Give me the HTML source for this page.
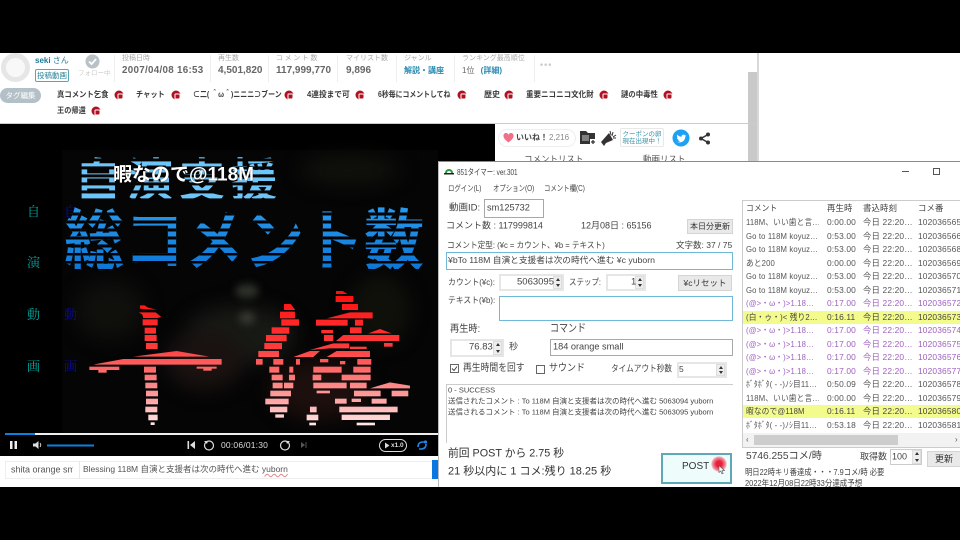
<!DOCTYPE html>
<html lang="ja"><head><meta charset="utf-8"><title>851タイマー</title>
<style>
*{box-sizing:border-box}
html,body{margin:0;padding:0;width:960px;height:540px;overflow:hidden;background:#000}
body{font-family:"Liberation Sans","Noto Sans CJK JP",sans-serif;color:#333;position:relative}
#all{position:absolute;left:0;top:0;width:960px;height:540px;overflow:hidden;filter:blur(.35px)}
.a{position:absolute}
.t{position:absolute;white-space:nowrap;line-height:1.2;transform:translateY(-50%) scaleX(var(--s,1));transform-origin:left center}
.lab{font-size:7px;color:#aaa}
.val{font-size:10px;font-weight:bold;color:#666}
.tag{font-size:8px;font-weight:bold;color:#3a3a3a}
.ic{position:absolute;width:9px;height:9px;border-radius:50%;background:#b01020;transform:translate(-50%,-50%)}
.ic:after{content:"";position:absolute;left:2.5px;top:2.5px;width:4px;height:4px;border:1px solid #fff;border-radius:1px}
.dv{position:absolute;width:1px;background:#eee;top:55px;height:27px}
.box{position:absolute;background:#fff;border:1px solid #a8a8a8}
.blu{border:1px solid #70b8d8}
.btn{position:absolute;background:#e9e9e9;border:1px solid #d4d4d4;text-align:center;color:#333}
.spin{position:absolute;background:#fff;border:2px solid #e6e6e6;color:#444}
.ar{position:absolute;width:9px;background:#eee;right:0;top:0;bottom:0;border:1px solid #ddd}
.ar:before,.ar:after{content:"";position:absolute;left:1.5px;border-left:2.5px solid transparent;border-right:2.5px solid transparent}
.ar:before{top:1px;border-bottom:3px solid #333}
.ar:after{bottom:1px;border-top:3px solid #333}
.f85{font-size:8.5px;color:#444}
.row{position:absolute;left:743px;width:217px;height:13px;font-size:8.4px;letter-spacing:.15px;color:#555;line-height:13px;white-space:nowrap}
.row span{position:absolute;top:0}
.row span:nth-child(1){left:3px;width:79px;overflow:hidden;transform:scaleX(.92);transform-origin:left center}
.row span:nth-child(2){left:84px}
.row span:nth-child(3){left:120px}
.row span:nth-child(4){left:175px}
.p{color:#a060c0}
.y{background:#f3fb8c;color:#444}
.head{color:#444}
.sf{font-size:13px;font-family:'Liberation Serif','Noto Serif CJK SC',serif}
</style></head>
<body><div id="all">

<!-- page white -->
<div class="a" style="left:0;top:53px;width:960px;height:434px;background:#fff"></div>
<div class="a" style="left:757px;top:53px;width:2px;height:108px;background:#d8d8d8"></div>
<div class="a" style="left:748px;top:72px;width:9px;height:89px;background:#c9c9c9"></div>
<div class="a" style="left:0;top:123px;width:757px;height:1px;background:#ccc"></div>

<!-- owner -->
<div class="a" style="left:1px;top:53px;width:29px;height:29px;border-radius:50%;border:5px solid #e6e6e6;background:#f8f8f8"></div>
<div class="t" style="left:35px;top:61px;font-size:8px;font-weight:bold;color:#1b7b9b">seki <span style="font-weight:normal">さん</span></div>
<div class="a" style="left:35px;top:69px;width:34px;height:13px;border:1px solid #5aa5b5;border-radius:2px;font-size:7.5px;line-height:11px;text-align:center;color:#2a8398">投稿動画</div>
<svg class="a" style="left:85px;top:54px" width="15" height="15"><circle cx="7.5" cy="7.5" r="7" fill="#b9c2c7"/><path d="M4 7.5l2.6 2.6L11 5" fill="none" stroke="#fff" stroke-width="1.8"/></svg>
<div class="t" style="left:78px;top:74px;font-size:6.5px;color:#ccc">フォロー中</div>

<div class="dv" style="left:114px"></div><div class="dv" style="left:210px"></div><div class="dv" style="left:268px"></div><div class="dv" style="left:337px"></div><div class="dv" style="left:396px"></div><div class="dv" style="left:454px"></div><div class="dv" style="left:534px"></div>

<div class="t lab" style="left:122px;top:59px">投稿日時</div><div class="t val" style="left:122px;top:71px;letter-spacing:.3px;--s:.98">2007/04/08 16:53</div>
<div class="t lab" style="left:218px;top:59px">再生数</div><div class="t val" style="left:218px;top:71px">4,501,820</div>
<div class="t lab" style="left:276px;top:59px;letter-spacing:1.6px">コメント数</div><div class="t val" style="left:276px;top:71px">117,999,770</div>
<div class="t lab" style="left:346px;top:59px">マイリスト数</div><div class="t val" style="left:346px;top:71px">9,896</div>
<div class="t lab" style="left:404px;top:59px">ジャンル</div><div class="t" style="left:404px;top:71px;font-size:8px;font-weight:bold;color:#2a8ab0">解説・講座</div>
<div class="t lab" style="left:462px;top:59px">ランキング最高順位</div><div class="t" style="left:462px;top:71px;font-size:8px;color:#666">1位 <span style="color:#2a8ab0;font-weight:bold;margin-left:4px">(詳細)</span></div>
<div class="t" style="left:540px;top:65px;font-size:9px;letter-spacing:1px;font-weight:bold;color:#ccc">•••</div>

<!-- tags -->
<div class="a" style="left:0;top:88px;width:41px;height:15px;border-radius:8px;background:#b4c0c8;color:#fff;font-size:7.5px;text-align:center;line-height:15px">タグ編集</div>
<div class="t tag" style="left:57px;top:95px;--s:.92">真コメント乞食</div><div class="ic" style="left:119px;top:95px"></div>
<div class="t tag" style="left:136px;top:95px;--s:.9">チャット</div><div class="ic" style="left:176px;top:95px"></div>
<div class="t tag" style="left:193px;top:95px;--s:.87">⊂二( ＾ω＾)ニニニ⊃ブーン</div><div class="ic" style="left:289px;top:95px"></div>
<div class="t tag" style="left:307px;top:95px;--s:.96">4連投まで可</div><div class="ic" style="left:360px;top:95px"></div>
<div class="t tag" style="left:378px;top:95px;--s:.86">6秒毎にコメントしてね</div><div class="ic" style="left:462px;top:95px"></div>
<div class="t tag" style="left:484px;top:95px">歴史</div><div class="ic" style="left:509px;top:95px"></div>
<div class="t tag" style="left:526px;top:95px;--s:.94">重要ニコニコ文化財</div><div class="ic" style="left:604px;top:95px"></div>
<div class="t tag" style="left:621px;top:95px;--s:.92">謎の中毒性</div><div class="ic" style="left:668px;top:95px"></div>
<div class="t tag" style="left:57px;top:111px;--s:.9">王の帰還</div><div class="ic" style="left:96px;top:111px"></div>

<!-- video -->
<div class="a" style="left:0;top:124px;width:495px;height:37px;background:#000"></div>
<div class="a" style="left:0;top:124px;width:438px;height:332px;background:#000;overflow:hidden">
<svg class="a" style="left:0;top:0" width="438" height="332" viewBox="0 124 438 332">
<defs>
<filter id="b" x="-30%" y="-30%" width="160%" height="160%" color-interpolation-filters="sRGB"><feGaussianBlur stdDeviation="9"/></filter>
<filter id="b2" x="-30%" y="-30%" width="160%" height="160%" color-interpolation-filters="sRGB"><feGaussianBlur stdDeviation="4"/></filter>
<linearGradient id="rd" gradientUnits="userSpaceOnUse" x1="0" y1="50" x2="0" y2="460"><stop offset="0" stop-color="#ff0d0d"/><stop offset=".4" stop-color="#ff3a3a"/><stop offset=".55" stop-color="#ff6464"/><stop offset=".8" stop-color="#ffa6a6"/><stop offset="1" stop-color="#fff2f2"/></linearGradient>
</defs>
<rect x="62" y="150" width="376" height="285" fill="#050505"/>
<g filter="url(#b)">
<ellipse cx="240" cy="335" rx="55" ry="30" fill="#171915"/>
<ellipse cx="205" cy="360" rx="40" ry="30" fill="#191210"/>
<ellipse cx="320" cy="390" rx="50" ry="30" fill="#1c0f0d"/>
<ellipse cx="110" cy="310" rx="35" ry="30" fill="#0f100c"/>
<ellipse cx="350" cy="170" rx="50" ry="15" fill="#10110c"/>
<ellipse cx="380" cy="310" rx="30" ry="35" fill="#10100b"/>
</g>
<g filter="url(#b2)">
<ellipse cx="247" cy="291" rx="12" ry="7" fill="#2e322a"/>
<ellipse cx="247" cy="318" rx="8" ry="6" fill="#383a33"/>
</g>
<g transform="translate(0,275) scale(.3333)" fill="url(#rd)">
<path d="M420 91h14l10 7 26 6-30-1-20-2z"/>
<path d="M417 112h50l17 14-12 3h-42l-3-10z"/>
<rect x="428" y="133" width="45" height="18"/><rect x="434" y="158" width="34" height="18"/><rect x="434" y="180" width="36" height="18"/><rect x="438" y="204" width="35" height="18"/>
<path d="M400 245L530 228 628 245z"/><path d="M283 268L370 252H665V269H283z"/>
<rect x="268" y="275" width="90" height="10"/><rect x="295" y="285" width="25" height="8"/><rect x="590" y="275" width="60" height="6"/><rect x="610" y="280" width="25" height="7"/>
<rect x="432" y="275" width="36" height="18"/><rect x="434" y="299" width="36" height="17"/><rect x="436" y="323" width="36" height="17"/><rect x="438" y="347" width="36" height="17"/><rect x="438" y="371" width="36" height="17"/><rect x="436" y="395" width="36" height="17"/><rect x="445" y="419" width="28" height="17"/><rect x="452" y="442" width="12" height="8"/>
<path d="M852 87h20l14 18h-34z"/><rect x="840" y="110" width="45" height="20"/><rect x="844" y="133" width="53" height="19"/><rect x="815" y="157" width="53" height="19"/><rect x="798" y="180" width="62" height="19"/><rect x="793" y="204" width="53" height="18"/><rect x="775" y="228" width="62" height="18"/><rect x="768" y="252" width="20" height="17"/><rect x="820" y="252" width="30" height="17"/><rect x="808" y="275" width="30" height="18"/><rect x="868" y="275" width="12" height="18"/><rect x="888" y="252" width="12" height="17"/><rect x="815" y="299" width="33" height="17"/><rect x="867" y="299" width="18" height="17"/><rect x="818" y="323" width="30" height="17"/><rect x="852" y="323" width="28" height="17"/><rect x="811" y="347" width="62" height="17"/><rect x="796" y="371" width="70" height="17"/><rect x="810" y="395" width="52" height="17"/><rect x="826" y="418" width="26" height="10"/>
<path d="M1008 48h20l14 9h-34z"/><rect x="1007" y="63" width="53" height="18"/><rect x="1026" y="87" width="48" height="18"/><path d="M980 130L1050 112H1118V130z"/><rect x="948" y="134" width="95" height="18"/><rect x="1065" y="134" width="24" height="18"/><rect x="1050" y="157" width="35" height="18"/><rect x="964" y="165" width="35" height="10"/><rect x="972" y="180" width="28" height="18"/><path d="M1008 198L1030 180H1198V198z"/><path d="M1105 175L1140 162 1175 175z"/><rect x="1152" y="204" width="26" height="11"/><path d="M930 225L1000 205H1048V220H990z"/><rect x="1050" y="215" width="50" height="7"/><path d="M880 246L930 228H960L940 246z"/><path d="M980 246L1010 228H1110V246z"/><rect x="960" y="252" width="25" height="10"/><rect x="1020" y="258" width="16" height="10"/><rect x="1072" y="252" width="42" height="17"/><rect x="940" y="275" width="85" height="18"/><rect x="1060" y="275" width="52" height="18"/><rect x="938" y="299" width="26" height="17"/><rect x="1025" y="299" width="87" height="17"/><rect x="940" y="323" width="100" height="17"/><rect x="1050" y="323" width="50" height="17"/><path d="M1110 340L1170 322 1230 332V340z"/><rect x="950" y="347" width="40" height="8"/><rect x="1062" y="347" width="80" height="17"/><rect x="1175" y="347" width="50" height="17"/><rect x="1005" y="371" width="35" height="15"/><rect x="1055" y="371" width="28" height="10"/><rect x="1115" y="371" width="45" height="15"/><rect x="930" y="395" width="20" height="17"/><rect x="1018" y="395" width="175" height="17"/><rect x="920" y="419" width="35" height="17"/><rect x="1025" y="419" width="145" height="16"/><rect x="928" y="443" width="20" height="8"/><rect x="1070" y="443" width="55" height="8"/>
</g>
</svg>
</div>
<!-- vertical scrolling text -->
<div class="t sf" style="left:27px;top:212px;color:#00a8a0">自</div>
<div class="t sf" style="left:27px;top:263px;color:#00a8a0">演</div>
<div class="t sf" style="left:27px;top:315px;color:#00a8a0">動</div>
<div class="t sf" style="left:27px;top:367px;color:#00a8a0">画</div>
<div class="t sf" style="left:64px;top:212px;color:#0a0aa8">自</div>
<div class="t sf" style="left:64px;top:315px;color:#0a0aa8">動</div>
<div class="t sf" style="left:64px;top:367px;color:#0a0aa8">画</div>
<!-- striped headings -->
<div class="t" style="left:75px;top:181px;font-size:46px;letter-spacing:6px;font-weight:bold;color:transparent;background:repeating-linear-gradient(#6cc6fa 0 5px,transparent 5px 8px);-webkit-background-clip:text;background-clip:text">自演支援</div>
<div class="t" style="left:64px;top:242px;font-size:60px;font-weight:bold;color:transparent;background:repeating-linear-gradient(transparent 0 2.7px,#000 2.700px 5.100px,transparent 5.100px 7.150px),linear-gradient(#2a9cf0,#0870d0);-webkit-background-clip:text;background-clip:text;transform:translateY(-50%) scale(1,1.12)">総コメント数</div>
<div class="t" style="left:113px;top:176px;font-size:19px;font-weight:bold;color:#fff;text-shadow:0 0 1px #000">暇なので@118M</div>

<!-- seekbar & controls -->
<div class="a" style="left:5px;top:433px;width:433px;height:2px;background:#eee"></div>
<div class="a" style="left:5px;top:433px;width:30px;height:2px;background:#0a80e0"></div>
<svg class="a" style="left:0;top:437px" width="438" height="18" viewBox="0 437 438 18">
<path d="M10 441h2.500v8H10zM14.500 441h2.500v8h-2.500z" fill="#eee"/>
<path d="M33 443.500h2.500l3-2.500v8l-3-2.500H33z" fill="#ddd"/><path d="M40 443q1.500 2 0 4" stroke="#ccc" fill="none"/>
<rect x="47" y="444.500" width="47" height="2" fill="#0a80e0"/>
<path d="M187.500 441h1.600v8h-1.600zM195 441v8l-5-4z" fill="#ddd"/>
<circle cx="209" cy="445.500" r="4.500" fill="none" stroke="#ddd" stroke-width="1.200"/><path d="M204 441l4 0-1 3z" fill="#ddd"/>
<circle cx="285" cy="445.500" r="4.500" fill="none" stroke="#ddd" stroke-width="1.200"/><path d="M290 441l-4 0 1 3z" fill="#ddd"/>
<path d="M301 442v6l4-3zM305.500 442h1v6h-1z" fill="#555"/>
<rect x="379.500" y="439.500" width="27" height="12" rx="6" fill="none" stroke="#ddd"/>
<path d="M385 442.500v6l4.500-3z" fill="#ddd"/>
<path d="M418 447q0-5 5-5h2M426 444q0 5-5 5h-2" fill="none" stroke="#1a88e8" stroke-width="1.600"/>
<circle cx="425.500" cy="442" r="1.600" fill="#1a88e8"/>
</svg>
<div class="t" style="left:221px;top:445px;font-size:8.500px;letter-spacing:.2px;color:#ddd">00:06/01:30</div>
<div class="t" style="left:391px;top:446px;font-size:6.500px;font-weight:bold;color:#ddd">x1.0</div>

<!-- comment bar -->
<div class="a" style="left:0;top:456px;width:438px;height:31px;background:#fff"></div>
<div class="a" style="left:5px;top:461px;width:428px;height:18px;border:1px solid #eee"></div>
<div class="a" style="left:79px;top:461px;width:1px;height:18px;background:#e8e8e8"></div>
<div class="t" style="left:11px;top:470px;font-size:9px;width:62px;overflow:hidden;color:#555">shita orange sm</div>
<div class="t" style="left:83px;top:469px;font-size:8.500px;color:#555">Blessing 118M 自演と支援者は次の時代へ進む <span style="text-decoration:underline wavy #d88;text-decoration-thickness:.5px">yuborn</span></div>
<div class="a" style="left:432px;top:460px;width:6px;height:19px;background:#0a78e0"></div>

<!-- right of video -->
<div class="a" style="left:498px;top:129px;width:78px;height:18px;border:1px solid #eee;border-radius:9px;background:#fff"></div>
<svg class="a" style="left:503px;top:133px" width="11" height="10"><path d="M5.500 9.500C1 6 .5 4.500.5 3A2.500 2.500 0 0 1 5.500 2 2.500 2.500 0 0 1 10.500 3c0 1.500-.5 3-5 6.500z" fill="#f07088"/></svg>
<div class="t" style="left:516px;top:138px;font-size:8px;font-weight:bold;color:#444">いいね！</div>
<div class="t" style="left:549px;top:138px;font-size:8px;color:#888">2,216</div>
<svg class="a" style="left:579px;top:130px" width="18" height="16"><path d="M1 1h6l2 2h7v11H1z" fill="#333"/><path d="M3 6h7M3 8h7M3 10h7" stroke="#fff" stroke-width=".8"/><path d="M11 9h6v6h-6z" fill="#fff"/><path d="M12 12h4M14 10v4" stroke="#333" stroke-width="1.300"/></svg>
<svg class="a" style="left:600px;top:129px" width="17" height="17"><path d="M1 13L9 4l4 7-7 3-2 3z" fill="#333"/><path d="M10 2l1 4M13 3l-1 4M16 6l-3 2M16 9l-3 0" stroke="#333"/></svg>
<div class="a" style="left:620px;top:128px;width:44px;height:19px;border:1px solid #e8e8e8;border-radius:2px;background:#fff;font-size:6.500px;line-height:7.500px;text-align:center;color:#3a93a8;padding-top:1.500px">クーポンの卵<br>現在出現中！</div>
<svg class="a" style="left:672px;top:129px" width="18" height="18"><circle cx="9" cy="9" r="8.500" fill="#1da1f2"/><path d="M4 12.500c4 2.200 9 .5 9.400-5l1-1.200-1.200.3c-.9-1.800-4-1-3.500 1.200-1.800 0-3.200-.8-4.500-2.200-.6 1.200-.2 2.400.7 3.100l-.9-.2c0 1.200.8 2 1.900 2.300l-.9 0c.3.900 1 1.400 2 1.500-1.100.8-2.500 1.100-4 .5z" fill="#fff"/></svg>
<svg class="a" style="left:698px;top:132px" width="13" height="13"><path d="M10 2.500L3 6.500 10 10.500" fill="none" stroke="#333" stroke-width="1.500"/><circle cx="10" cy="2.500" r="2" fill="#333"/><circle cx="3" cy="6.500" r="2" fill="#333"/><circle cx="10" cy="10.500" r="2" fill="#333"/></svg>
<div class="t" style="left:524px;top:159px;font-size:8.500px;color:#555">コメントリスト</div>
<div class="t" style="left:643px;top:159px;font-size:8.500px;color:#555">動画リスト</div>

<!-- window -->
<div class="a" style="left:438px;top:161px;width:522px;height:326px;background:#fff;border-top:1px solid #8a8a8a;border-left:1px solid #bbb"></div>
<svg class="a" style="left:444px;top:166px" width="10" height="9"><path d="M1 7a4 4 0 0 1 8 0z" fill="#2a9a3a"/><path d="M3 7a2 2 0 0 1 4 0z" fill="#fff"/><rect x="0" y="7" width="10" height="1.500" fill="#222"/></svg>
<div class="t" style="left:457px;top:172px;font-size:8.500px;color:#444;--s:.75">851タイマー: ver.301</div>
<div class="a" style="left:902px;top:171px;width:7px;height:1px;background:#555"></div>
<div class="a" style="left:933px;top:168px;width:7px;height:7px;border:1px solid #555"></div>

<div class="t" style="left:448px;top:189px;font-size:8px;color:#444;--s:.8">ログイン(L)</div>
<div class="t" style="left:493px;top:189px;font-size:8px;color:#444;--s:.8">オプション(O)</div>
<div class="t" style="left:544px;top:189px;font-size:8px;color:#444;--s:.8">コメント欄(C)</div>

<div class="t" style="left:449px;top:208px;font-size:9.500px;color:#444">動画ID:</div>
<div class="box" style="left:484px;top:199px;width:60px;height:19px"></div>
<div class="t" style="left:487px;top:208px;font-size:9.200px;color:#444">sm125732</div>
<div class="t" style="left:446px;top:226px;font-size:9px;color:#444">コメント数 : 117999814</div>
<div class="t" style="left:581px;top:226px;font-size:9px;color:#444">12月08日 : 65156</div>
<div class="btn" style="left:687px;top:219px;width:46px;height:15px;font-size:8px;line-height:13px">本日分更新</div>
<div class="t f85" style="left:447px;top:245px;--s:.9">コメント定型: (¥c = カウント、¥b = テキスト)</div>
<div class="t f85" style="left:676px;top:245px">文字数: 37 / 75</div>
<div class="box blu" style="left:446px;top:252px;width:287px;height:18px"></div>
<div class="t" style="left:448px;top:260px;font-size:8.700px;color:#444">¥bTo 118M 自演と支援者は次の時代へ進む ¥c yuborn</div>
<div class="t f85" style="left:448px;top:282px;--s:.92">カウント(¥c):</div>
<div class="spin" style="left:499px;top:274px;width:65px;height:17px"><div class="ar"></div></div>
<div class="t" style="left:517px;top:282px;font-size:9.500px;color:#444">5063095</div>
<div class="t f85" style="left:569px;top:282px;--s:.88">ステップ:</div>
<div class="spin" style="left:606px;top:274px;width:40px;height:17px"><div class="ar"></div></div>
<div class="t" style="left:631px;top:282px;font-size:9.500px;color:#444">1</div>
<div class="btn" style="left:678px;top:275px;width:54px;height:16px;font-size:8.500px;line-height:14px">¥cリセット</div>
<div class="t f85" style="left:448px;top:300px;--s:.92">テキスト(¥b):</div>
<div class="box blu" style="left:499px;top:296px;width:234px;height:25px"></div>

<div class="t" style="left:450px;top:330px;font-size:10px;color:#444;--s:.92">再生時:</div>
<div class="t" style="left:550px;top:329px;font-size:11px;color:#444;--s:.82">コマンド</div>
<div class="spin" style="left:450px;top:339px;width:54px;height:18px"><div class="ar"></div></div>
<div class="t" style="left:469px;top:347px;font-size:9.500px;color:#444">76.83</div>
<div class="t" style="left:509px;top:347px;font-size:9px;color:#444">秒</div>
<div class="box" style="left:550px;top:339px;width:183px;height:17px"></div>
<div class="t" style="left:553px;top:347px;font-size:9.200px;color:#444">184 orange small</div>

<svg class="a" style="left:450px;top:364px" width="10" height="10"><rect x=".5" y=".5" width="8" height="8" fill="#fff" stroke="#666"/><path d="M2 4.500l2 2 3-4" fill="none" stroke="#444"/></svg>
<div class="t" style="left:463px;top:369px;font-size:10px;color:#444;--s:.88">再生時間を回す</div>
<div class="a" style="left:536px;top:365px;width:9px;height:9px;border:1px solid #666"></div>
<div class="t" style="left:549px;top:369px;font-size:10px;color:#444;--s:.9">サウンド</div>
<div class="t" style="left:611px;top:369px;font-size:9px;color:#444;--s:.85">タイムアウト秒数</div>
<div class="spin" style="left:677px;top:362px;width:50px;height:16px"><div class="ar"></div></div>
<div class="t" style="left:679px;top:369px;font-size:8.500px;color:#444">5</div>

<div class="a" style="left:446px;top:384px;width:287px;height:59px;border-top:1px solid #ccc;border-left:1px solid #ccc"></div>
<div class="t" style="left:448px;top:390px;font-size:7.500px;color:#444">0 - SUCCESS</div>
<div class="t" style="left:448px;top:401px;font-size:7.500px;color:#444">送信されたコメント : To 118M 自演と支援者は次の時代へ進む 5063094 yuborn</div>
<div class="t" style="left:448px;top:412px;font-size:7.500px;color:#444">送信されるコメント : To 118M 自演と支援者は次の時代へ進む 5063095 yuborn</div>

<div class="t" style="left:448px;top:454px;font-size:11px;color:#333;--s:.98">前回 POST から 2.75 秒</div>
<div class="t" style="left:448px;top:472px;font-size:11px;color:#333">21 秒以内に 1 コメ:残り 18.25 秒</div>
<div class="a" style="left:661px;top:453px;width:71px;height:31px;background:#effcfc;border:2px solid #5fa8b8"></div>
<div class="t" style="left:682px;top:467px;font-size:10px;color:#333">POST</div>
<div class="a" style="left:711px;top:456px;width:16px;height:16px;border-radius:50%;background:radial-gradient(#e8203a 25%,rgba(240,80,100,.55) 60%,rgba(240,80,100,0) 72%)"></div>
<svg class="a" style="left:718px;top:465px" width="8" height="10"><path d="M1 .5v7l1.800-1.500 1.200 2.800 1.200-.5-1.200-2.700H6.500z" fill="#fff" stroke="#555" stroke-width=".6"/></svg>

<!-- list -->
<div class="a" style="left:742px;top:200px;width:218px;height:248px;border:1px solid #ccc;border-right:0"></div>
<div class="row head" style="top:202px"><span>コメント</span><span>再生時</span><span>書込時刻</span><span>コメ番</span></div>
<div class="row" style="top:216px"><span>118M、いい歯と言…</span><span>0:00.00</span><span>今日 22:20…</span><span>102036565</span></div>
<div class="row" style="top:229.500px"><span>Go to 118M koyuz…</span><span>0:53.00</span><span>今日 22:20…</span><span>102036566</span></div>
<div class="row" style="top:243px"><span>Go to 118M koyuz…</span><span>0:53.00</span><span>今日 22:20…</span><span>102036568</span></div>
<div class="row" style="top:256.500px"><span>あと200</span><span>0:00.00</span><span>今日 22:20…</span><span>102036569</span></div>
<div class="row" style="top:270px"><span>Go to 118M koyuz…</span><span>0:53.00</span><span>今日 22:20…</span><span>102036570</span></div>
<div class="row" style="top:283.500px"><span>Go to 118M koyuz…</span><span>0:53.00</span><span>今日 22:20…</span><span>102036571</span></div>
<div class="row p" style="top:297px"><span>(@&gt;・ω・)&gt;1.18…</span><span>0:17.00</span><span>今日 22:20…</span><span>102036572</span></div>
<div class="row y" style="top:310.500px"><span>(白・ゥ・)&lt; 残り2…</span><span>0:16.11</span><span>今日 22:20…</span><span>102036573</span></div>
<div class="row p" style="top:324px"><span>(@&gt;・ω・)&gt;1.18…</span><span>0:17.00</span><span>今日 22:20…</span><span>102036574</span></div>
<div class="row p" style="top:337.500px"><span>(@&gt;・ω・)&gt;1.18…</span><span>0:17.00</span><span>今日 22:20…</span><span>102036575</span></div>
<div class="row p" style="top:351px"><span>(@&gt;・ω・)&gt;1.18…</span><span>0:17.00</span><span>今日 22:20…</span><span>102036576</span></div>
<div class="row p" style="top:364.500px"><span>(@&gt;・ω・)&gt;1.18…</span><span>0:17.00</span><span>今日 22:20…</span><span>102036577</span></div>
<div class="row" style="top:378px"><span>ﾎﾞﾀﾎﾞﾀ( - -)ﾉｼ目11…</span><span>0:50.09</span><span>今日 22:20…</span><span>102036578</span></div>
<div class="row" style="top:391.500px"><span>118M、いい歯と言…</span><span>0:00.00</span><span>今日 22:20…</span><span>102036579</span></div>
<div class="row y" style="top:405px"><span>暇なので@118M</span><span>0:16.11</span><span>今日 22:20…</span><span>102036580</span></div>
<div class="row" style="top:418.500px"><span>ﾎﾞﾀﾎﾞﾀ( - -)ﾉｼ目11…</span><span>0:53.18</span><span>今日 22:20…</span><span>102036581</span></div>
<div class="a" style="left:743px;top:433px;width:217px;height:14px;background:#f2f2f2"></div>
<div class="a" style="left:754px;top:435px;width:144px;height:10px;background:#cdcdcd"></div>
<div class="t" style="left:746px;top:440px;font-size:8px;color:#555">‹</div>
<div class="t" style="left:955px;top:440px;font-size:8px;color:#555">›</div>

<div class="t" style="left:746px;top:457px;font-size:10.200px;color:#444">5746.255コメ/時</div>
<div class="t" style="left:860px;top:457px;font-size:9px;color:#444">取得数</div>
<div class="box" style="left:890px;top:449px;width:32px;height:16px;border-color:#ccc"><div class="ar"></div></div>
<div class="t" style="left:892px;top:457px;font-size:9px;color:#444">100</div>
<div class="btn" style="left:927px;top:451px;width:34px;height:16px;font-size:9px;line-height:14px">更新</div>
<div class="t f85" style="left:745px;top:472px;--s:.86">明日22時キリ番達成・・・7.9コメ/時 必要</div>
<div class="t f85" style="left:745px;top:483px;--s:.88">2022年12月08日22時33分達成予想</div>

<!-- bottom black -->
<div class="a" style="left:0;top:487px;width:960px;height:53px;background:#000"></div>
<div class="a" style="left:0;top:0;width:960px;height:53px;background:#000"></div>
</div></body></html>
